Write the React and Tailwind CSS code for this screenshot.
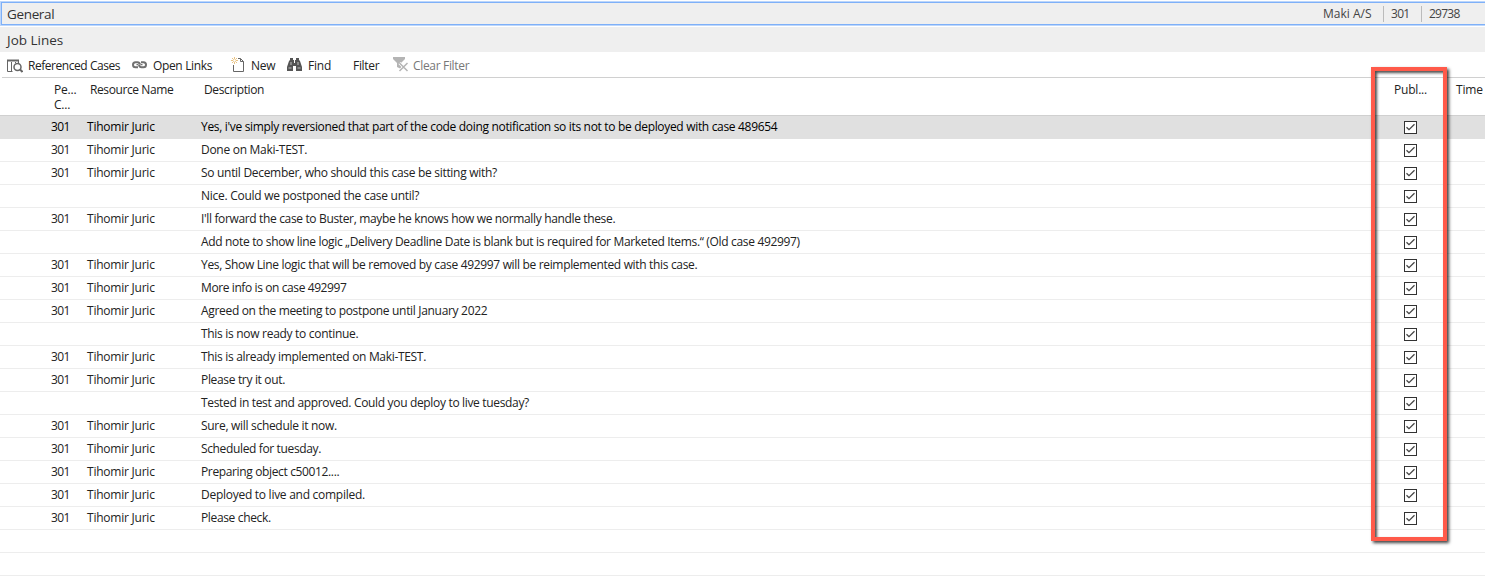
const rows = [
  ["301", "Yes, i've simply reversioned that part of the code doing notification so its not to be deployed with case 489654", "tracking-[-0.32px]"],
  ["301", "Done on Maki-TEST.", "tracking-[-0.28px]"],
  ["301", "So until December, who should this case be sitting with?", "tracking-[-0.3px]"],
  ["", "Nice. Could we postponed the case until?", "tracking-[-0.27px]"],
  ["301", "I'll forward the case to Buster, maybe he knows how we normally handle these.", "tracking-[-0.35px]"],
  ["", "Add note to show line logic „Delivery Deadline Date is blank but is required for Marketed Items.“ (Old case 492997)", "tracking-[-0.33px]"],
  ["301", "Yes, Show Line logic that will be removed by case 492997 will be reimplemented with this case.", "tracking-[-0.33px]"],
  ["301", "More info is on case 492997", "tracking-[-0.4px]"],
  ["301", "Agreed on the meeting to postpone until January 2022", "tracking-[-0.32px]"],
  ["", "This is now ready to continue.", "tracking-[-0.3px]"],
  ["301", "This is already implemented on Maki-TEST.", "tracking-[-0.32px]"],
  ["301", "Please try it out.", "tracking-[-0.33px]"],
  ["", "Tested in test and approved. Could you deploy to live tuesday?", "tracking-[-0.33px]"],
  ["301", "Sure, will schedule it now.", "tracking-[-0.3px]"],
  ["301", "Scheduled for tuesday.", "tracking-[-0.36px]"],
  ["301", "Preparing object c50012....", "tracking-[-0.36px]"],
  ["301", "Deployed to live and compiled.", "tracking-[-0.27px]"],
  ["301", "Please check.", "tracking-[-0.35px]"],
];

function CasesIcon() {
  return (
    <svg width="16" height="14" viewBox="0 0 16 14" className="shrink-0" fill="none" stroke="#666">
      <path d="M5.500 12.500H.5V1M11.500 1V4M4.500 3V12M8.500 3V4" />
      <path d="M0 1.500H12" strokeWidth="2" />
      <circle cx="10.500" cy="8" r="3.500" fill="#fff" strokeWidth="1.500" />
      <path d="M13 10.500L15.500 13" strokeWidth="2" />
    </svg>
  );
}

function LinkIcon() {
  return (
    <svg width="15" height="8" viewBox="0 0 15 8" className="relative -top-px shrink-0" fill="none" stroke="#707070" strokeWidth="2">
      <path d="M6 6.200H3.500A2.500 2.500 0 0 1 3.500 1.200H5.500Q7.500 1.200 8 3.500" />
      <path d="M9 1.200H11.500A2.500 2.500 0 0 1 11.500 6.200H9.500Q7.500 6.200 7 4" />
      <path d="M4.500 3.700H6.500M8.500 3.700H10.500" strokeWidth="1.200" />
    </svg>
  );
}

function NewIcon() {
  return (
    <svg width="14" height="15" viewBox="0 0 14 15" className="relative -top-px shrink-0" fill="none">
      <path d="M2.500 8V14.500H12.500V4.500L9.500 1.500H7M9.500 1.500V4.500H12.500" stroke="#666" />
      <path d="M3.500 0V7M0 3.500H7M1 1L6 6M6 1L1 6" stroke="#e5b566" strokeWidth=".8" />
      <circle cx="3.500" cy="3.500" r="1.200" fill="#fff" />
    </svg>
  );
}

function FindIcon() {
  return (
    <svg width="15" height="14" viewBox="0 0 15 14" className="relative -top-px shrink-0" fill="#555">
      <path d="M3 0H6V2H7V5H8V2H9V0H12V2L13 3L15 9V13H9V8H6V13H0V9L2 3L3 2Z" />
      <path d="M1.500 10H4.500M10.500 10H13.500M4 4V7M11 4V7" stroke="#ddd" strokeWidth=".8" />
    </svg>
  );
}

function ClearIcon() {
  return (
    <svg width="16" height="15" viewBox="0 0 16 15" className="relative -top-px shrink-0" fill="#b4b4b4">
      <path d="M0 0H12V2L8 6V12L4 10V6L0 2Z" />
      <path d="M6.500 6L14.500 14M14.500 6L6.500 14" stroke="#fff" strokeWidth="3" />
      <path d="M6.500 6L14.500 14M14.500 6L6.500 14" stroke="#b4b4b4" strokeWidth="1.500" />
    </svg>
  );
}

function Check() {
  return (
    <svg width="13" height="13" viewBox="0 0 13 13" className="block" fill="none">
      <rect x=".5" y=".5" width="12" height="12" fill="#fff" stroke="#333" />
      <path d="M2.500 6.200L5 8.700L10.500 3.300" stroke="#444" strokeWidth="1.300" />
    </svg>
  );
}

export default function App() {
  return (
    <div className="relative h-[578px] w-[1485px] overflow-hidden bg-white font-['Open_Sans','Noto_Sans',sans-serif] text-[12px] text-[#222]">
      <div className="pt-px">
        <div className="flex h-[25px] border border-r-0 border-[#bcd6fb]">
          <div className="flex flex-1 items-center border border-r-0 border-[#7eb0f8] bg-[#efefef] pl-[5px] text-[#444]">
            <span className="w-[1316px] pt-px text-[13.5px] tracking-[-0.35px] text-[#333]">General</span>
            <span className="w-[60px]">Maki A/S</span>
            <span className="flex h-4 w-[38px] items-center border-l border-[#bbb] pl-[7px] tracking-[-0.7px]">301</span>
            <span className="flex h-4 items-center border-l border-[#bbb] pl-[7px] tracking-[-0.75px]">29738</span>
          </div>
        </div>
      </div>
      <div className="mt-px flex h-[25px] items-center bg-[#efefef] pl-[7px] pt-[2px] text-[13.5px] text-[#333]"><span>Job Lines</span></div>
      <div className="ml-[2px] flex h-[26px] items-center border-b border-[#d0d0d0] pl-[5px] pt-[2px]">
        <div className="flex w-[125px] items-center gap-[5px]"><CasesIcon /><span className="whitespace-nowrap tracking-[-0.45px]">Referenced Cases</span></div>
        <div className="flex w-[99px] items-center gap-[6px]"><LinkIcon /><span className="tracking-[-0.35px]">Open Links</span></div>
        <div className="flex w-[56px] items-center gap-[6px]"><NewIcon /><span className="tracking-[-0.2px]">New</span></div>
        <div className="flex w-[66px] items-center gap-[6px]"><FindIcon /><span className="tracking-[-0.2px]">Find</span></div>
        <span className="w-[40px] tracking-[-0.3px]">Filter</span>
        <div className="flex items-center gap-[4px] text-[#777]"><ClearIcon /><span className="tracking-[-0.33px]">Clear Filter</span></div>
      </div>
      <div className="flex h-[37px] pt-[4px] leading-[15px]">
        <span className="box-content w-[36px] pl-[54px] tracking-[-0.2px]">Pe...<br />C...</span>
        <span className="w-[114px] tracking-[-0.4px]">Resource Name</span>
        <span className="w-[1190px] tracking-[-0.36px]">Description</span>
        <span className="w-[62px] tracking-[-0.2px]">Publ...</span>
        <span className="tracking-[-0.2px]">Time</span>
      </div>
      {rows.map(([num, text, tracking], i) => (
        <div key={i} className={"flex items-center border-b " + (i === 0 ? "h-[24px] border-t border-t-[#d0d0d0] border-b-[#e0e0e0] bg-[#e0e0e0] text-black" : "h-[23px] border-[#ededed]")}>
          <span className="w-[87px] pl-[51px] tracking-[-0.65px]">{num}</span>
          <span className="w-[114px] tracking-[-0.23px]">{num ? "Tihomir Juric" : ""}</span>
          <span className="w-[1203px] whitespace-nowrap"><span className={tracking}>{text}</span></span>
          <Check />
        </div>
      ))}
      <div className="h-[23px] border-b border-[#ededed]" />
      <div className="h-[23px] border-b border-[#ededed]" />
      <div className="absolute left-[1371px] top-[67px] h-[474px] w-[76px] border-4 border-[#ff5a4a] shadow-[2px_2px_3px_rgba(0,0,0,0.75),inset_2px_2px_3px_rgba(0,0,0,0.7)]" />
    </div>
  );
}
